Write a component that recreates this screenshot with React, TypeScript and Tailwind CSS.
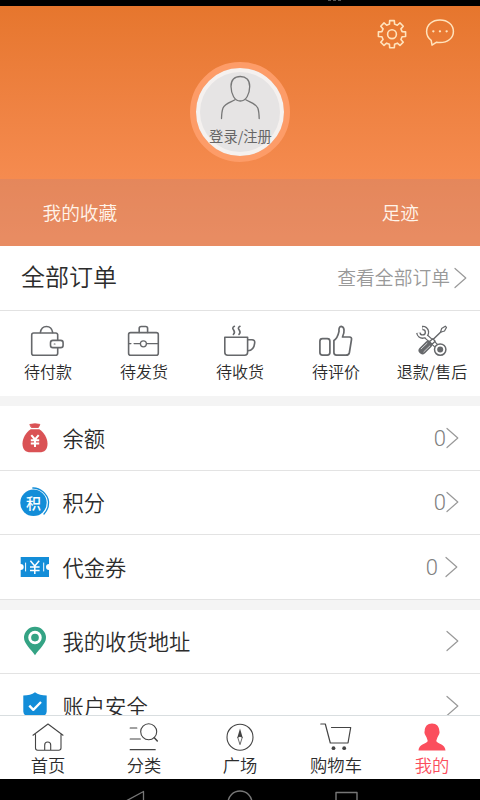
import React from "react";

type IconProps = { children: React.ReactNode; w?: number; h?: number; className?: string };

function Icon({ children, w = 36, h = 34, className = "" }: IconProps) {
  return (
    <svg
      width={w}
      height={h}
      viewBox={`0 0 ${w} ${h}`}
      fill="none"
      stroke="currentColor"
      strokeLinecap="round"
      strokeLinejoin="round"
      className={`shrink-0 ${className}`}
    >
      {children}
    </svg>
  );
}

function gearPath(cx: number, cy: number) {
  const teeth = 8;
  const pts: string[] = [];
  const step = (Math.PI * 2) / teeth;
  for (let i = 0; i < teeth; i++) {
    const a = i * step - Math.PI / 2;
    const corners: [number, number][] = [
      [10.4, -0.25],
      [13.8, -0.17],
      [13.8, 0.17],
      [10.4, 0.25],
    ];
    for (const [r, d] of corners) {
      pts.push(`${(cx + r * Math.cos(a + d)).toFixed(2)} ${(cy + r * Math.sin(a + d)).toFixed(2)}`);
    }
  }
  return `M${pts.join("L")}Z`;
}

const Chevron = ({ className = "" }: { className?: string }) => (
  <Icon w={13} h={22} className={`text-[#999] ${className}`}>
    <path d="M1 1.5L11.8 11L1 20.5" strokeWidth="1.2" />
  </Icon>
);

const orders = [
  {
    label: "待付款",
    icon: (
      <Icon>
        <path d="M27.7 16V11.5A2 2 0 0 0 25.7 9H3.7A2 2 0 0 0 1.7 11V29.3A2 2 0 0 0 3.7 31.3H25.7A2 2 0 0 0 27.7 29.3V24" strokeWidth="1.6" />
        <path d="M10.4 8.5C11 4.5 13 2.5 16.5 2.5S22 4.5 22.7 8.5" strokeWidth="1.6" />
        <rect x="20.5" y="16.4" width="12.6" height="7.2" rx="2.4" strokeWidth="1.6" />
        <path d="M24.2 20H25" strokeWidth="1.2" />
      </Icon>
    ),
  },
  {
    label: "待发货",
    icon: (
      <Icon>
        <rect x="2.6" y="8.6" width="29.7" height="22.7" rx="2" strokeWidth="1.6" />
        <path d="M13.2 8.5V4.5Q13.2 2.5 15.2 2.5H19.6Q21.6 2.5 21.6 4.5V8.5" strokeWidth="1.6" />
        <circle cx="17.4" cy="19.8" r="3" strokeWidth="1.3" />
        <path d="M8 19.6H14.2M20.5 19.6H32M2.8 19.6H5" strokeWidth="1.1" />
      </Icon>
    ),
  },
  {
    label: "待收货",
    icon: (
      <Icon>
        <path d="M2.8 13.2H25.6V28.3Q25.6 31.3 22.6 31.3H5.8Q2.8 31.3 2.8 28.3Z" strokeWidth="1.6" />
        <path d="M25.8 15.8H30Q33 15.8 32.7 18.8C32.3 23 30 26.5 25.8 26.8" strokeWidth="1.6" />
        <path d="M12.4 2.3C7.6 4.8 15.4 7 11.4 10.4M18 2.3C13.2 4.8 21 7 17 10.4" strokeWidth="1.6" />
      </Icon>
    ),
  },
  {
    label: "待评价",
    icon: (
      <Icon>
        <rect x="1.9" y="14.7" width="10" height="16.5" rx="2.6" strokeWidth="1.7" />
        <path d="M15.9 16.5C18.8 14.8 20.2 11.2 21 7.4C20.7 4.5 21.5 2.3 23.2 2.3C26.6 2.6 26.9 8 24.5 13H31.5Q33.9 13.3 33.5 15.5L31.4 28.5Q30.9 31.2 28 31.2H18.5Q15.9 31 15.9 28.5Z" strokeWidth="1.7" />
      </Icon>
    ),
  },
  {
    label: "退款/售后",
    icon: (
      <Icon>
        <path d="M11.5 11.8L22 21.5" strokeWidth="5" strokeLinecap="butt" />
        <path d="M11.5 11.8L22 21.5" strokeWidth="2.4" stroke="#fff" strokeLinecap="butt" />
        <path d="M8.2 4A4.3 4.3 0 1 1 4.4 8.8" strokeWidth="4.6" strokeLinecap="butt" />
        <path d="M8.6 4A4.3 4.3 0 1 1 4.4 8.4" strokeWidth="2" stroke="#fff" strokeLinecap="butt" />
        <path d="M12 12.3L20 19.7" strokeWidth="2.4" stroke="#fff" />
        <path d="M18.5 16L26.8 8" strokeWidth="1.5" />
        <path d="M26.5 8.2L27.6 4.6L31.3 2.2L32.5 3.4L30.5 7Z" strokeWidth="1.2" fill="#fff" />
        <path d="M8.4 26.4L14.4 20.6" strokeWidth="7.6" />
        <path d="M7.2 24.8L13 19.3" strokeWidth="0.7" stroke="#fff" />
        <path d="M9.8 27.8L15.8 22" strokeWidth="0.7" stroke="#fff" />
        <path d="M15.6 17.6L18.8 14.8L21.2 17.2L18 20.2Z" fill="#fff" strokeWidth="1.3" />
        <circle cx="26.2" cy="25.6" r="5.7" fill="#fff" strokeWidth="1.5" />
        <circle cx="26.2" cy="25.6" r="3" fill="currentColor" stroke="none" />
      </Icon>
    ),
  },
];

const BagIcon = () => (
  <Icon w={28} h={30} className="text-[#da5255]">
    <path d="M9.2 1.4Q14 .3 18.8 1.4L17.4 4.4H10.6Z" fill="currentColor" strokeWidth="1" />
    <path d="M9.7 6.2H18.3C23 9.4 26.5 15 26.5 20.5C26.5 26.8 23.5 29.3 18.5 29.3H9.5C4.5 29.3 1.5 26.8 1.5 20.5C1.5 15 5 9.4 9.7 6.2Z" fill="currentColor" stroke="none" />
    <path d="M10.3 12.2L14 16.5L17.7 12.2M14 16.5V23.9M9.8 17.2H18.2M9.8 20.5H18.2" stroke="#fff" strokeWidth="2" strokeLinecap="butt" />
  </Icon>
);

const PointsIcon = () => (
  <span className="relative flex h-[30px] w-[30px] shrink-0 items-center justify-center">
    <Icon w={30} h={30} className="absolute inset-0 text-[#138dd8]">
      <circle cx="13.5" cy="15.8" r="13.2" fill="currentColor" stroke="none" />
      <path d="M12.8 1C20 .7 27.5 7 28.5 14.5C28.8 19.5 27 23.8 24 27" strokeWidth="1.3" />
    </Icon>
    <span className="relative -left-[1.5px] text-[15px] leading-none font-medium text-white">积</span>
  </span>
);

const CouponIcon = () => (
  <Icon w={30} h={22} className="text-[#138dd8]">
    <path d="M.7 1H29V8A3 3 0 0 0 29 14V21H.7V14A3 3 0 0 0 .7 8Z" fill="currentColor" stroke="none" />
    <path d="M10.4 4.8L14.8 10L19.2 4.8M14.8 10V18M10 11H19.6M10 14.4H19.6" stroke="#fff" strokeWidth="1.5" strokeLinecap="butt" />
    <path d="M5.6 7V15M23.7 7V15" stroke="#fff" strokeWidth="1" />
  </Icon>
);

const PinIcon = () => (
  <Icon w={24} h={30} className="text-[#34a384]">
    <path d="M12 .8A10.9 10.9 0 0 1 23 11.7C23 17.5 16.5 22.7 12 29.2C7.5 22.7 1 17.5 1 11.7A10.9 10.9 0 0 1 12 .8Z" fill="currentColor" stroke="none" />
    <circle cx="12" cy="11.6" r="5.3" stroke="#fff" strokeWidth="2.9" />
  </Icon>
);

const ShieldIcon = () => (
  <Icon w={24} h={28} className="text-[#138dd8]">
    <path d="M12 .3Q16.5 3.5 23.7 3.5V19.5Q23.5 23 20 24.2L12 27.3L4 24.2Q.5 23 .3 19.5V3.5Q7.5 3.5 12 .3Z" fill="currentColor" stroke="none" />
    <path d="M6.3 13.6L10.3 17.9L18 10" stroke="#fff" strokeWidth="2.3" strokeLinecap="butt" />
  </Icon>
);

type RowProps = { icon: React.ReactNode; label: string; value?: string; inset?: boolean; last?: boolean };

function Row({ icon, label, value, inset, last }: RowProps) {
  return (
    <div
      className={`flex h-[64.5px] shrink-0 items-center bg-white ${inset ? "pr-[22px]" : "pr-[21px]"} ${last ? "" : "border-b border-[#e3e3e3]"}`}
    >
      <span className="ml-[14px] flex w-[42px] shrink-0 justify-center">{icon}</span>
      <span className="ml-[6.5px] flex-1 pb-px text-[21.3px] leading-none font-[350] text-[#2c2c2c]">{label}</span>
      {value && <span className="pt-[2px] font-['Roboto'] text-[22px] leading-none font-light text-[#808080]">{value}</span>}
      <Chevron className={inset ? "ml-[7px]" : ""} />
    </div>
  );
}

const tabs = [
  {
    label: "首页",
    icon: (
      <Icon w={32} h={30}>
        <path d="M1 13.2L16 2L31 13.2M3.5 12.5V26Q3.5 28.2 5.7 28.2H26.7Q29 28.2 29 26V12.5M12.7 28V23Q12.7 20 15.7 20T18.7 23V28" strokeWidth="1.1" />
      </Icon>
    ),
  },
  {
    label: "分类",
    icon: (
      <Icon w={32} h={30}>
        <circle cx="20.7" cy="9.7" r="8" strokeWidth="1.1" />
        <path d="M26.3 15.8L29.3 19" strokeWidth="1.5" />
        <path d="M2.2 6H8.8M2.2 17H12.3M2.2 27.7H27.2" strokeWidth="1.2" />
      </Icon>
    ),
  },
  {
    label: "广场",
    icon: (
      <Icon w={32} h={30}>
        <circle cx="16" cy="15.2" r="13" strokeWidth="1.1" />
        <path d="M13.8 15.6L16 22.6L18.2 15.6" strokeWidth=".8" />
        <path d="M16 6.5L18.8 16L16 14.8L13.2 16Z" fill="currentColor" stroke="none" />
      </Icon>
    ),
  },
  {
    label: "购物车",
    icon: (
      <Icon w={32} h={30}>
        <path d="M.8 2H5.3L10.3 21H28L30.7 5.5H11.5" strokeWidth="1.2" />
        <circle cx="13.5" cy="26.2" r="1.9" fill="currentColor" stroke="none" />
        <circle cx="24.2" cy="26.2" r="1.9" fill="currentColor" stroke="none" />
      </Icon>
    ),
  },
  {
    label: "我的",
    active: true,
    icon: (
      <Icon w={32} h={30}>
        <path d="M16 1.5C20.6 1.5 23.3 4.6 23.3 8.8C24.2 11 22.8 13 21.5 15.2C20.8 17.5 20 18.5 20.5 19.5C22 21.5 29.3 22.5 29.5 28.5H2.5C2.7 22.5 10 21.5 11.5 19.5C12 18.5 11.2 17.5 10.5 15.2C9.2 13 7.8 11 8.7 8.8C8.7 4.6 11.4 1.5 16 1.5Z" fill="currentColor" stroke="none" />
      </Icon>
    ),
  },
];

export default function App() {
  return (
    <div className="flex h-[800px] w-[480px] flex-col overflow-hidden bg-[#f4f4f4] font-['Noto_Sans_CJK_SC',sans-serif]">
      <div className="flex h-[6px] shrink-0 items-start justify-center gap-[2px] bg-black pl-[189px]">
        <i className="h-px w-[3px] bg-[#555]" />
        <i className="h-px w-[3px] bg-[#555]" />
        <i className="h-px w-[3px] bg-[#555]" />
      </div>

      <header className="flex h-[240px] shrink-0 flex-col bg-linear-to-b from-[#e6762d] to-[#fb935b]">
        <div className="relative flex h-[173px] justify-center pt-[56px]">
          <div className="absolute top-[12px] right-[24px] flex items-center gap-[16px] text-[#ffe3bd]">
            <Icon w={32} h={32}>
              <path d={gearPath(16, 16.2)} strokeWidth="1.6" />
              <circle cx="16" cy="16.2" r="4.4" strokeWidth="1.6" />
            </Icon>
            <Icon w={32} h={32}>
              <path d="M7.2 22.3C4.2 20.2 2.6 17 2.6 13.6C2.6 6.8 8.3 2 16 2S29.4 6.8 29.4 13.4S23.7 24.6 16 24.6C14.8 24.6 13.6 24.5 12.6 24.2L8 27.2Z" strokeWidth="1.5" />
              <path d="M9.3 13.3H9.4M15.9 13.3H16M22.6 13.3H22.7" strokeWidth="2.3" />
            </Icon>
          </div>
          <div className="flex h-[100px] w-[100px] flex-col items-center rounded-full border-[6px] border-[#fd9c68] bg-[#e6e4e4] shadow-[inset_0_0_0_4px_#f5f1ef]">
            <Icon w={44} h={46} className="mt-[7px] text-[#777]">
              <path d="M22.3 1.5C28 1.5 31.8 5 31.7 11.5C31.6 19.5 28 26 22.3 26S13.2 19.5 13 11.5C12.8 5 16.6 1.5 22.3 1.5Z" strokeWidth="1.3" />
              <path d="M17 24.8C13.5 27 7 28 5 33Q3.7 36.5 3.5 43.5M27.8 24.8C31.3 27 37.5 28 39.8 33Q41 36.5 41.2 43.5" strokeWidth="1.3" />
            </Icon>
            <span className="mt-[7px] ml-px text-[14.3px] leading-[16px] whitespace-nowrap text-[#666]">登录/注册</span>
          </div>
        </div>
        <div className="flex h-[67px] items-center justify-between bg-[#c58072]/35 pr-[61px] pl-[42.5px] text-[18.7px] leading-none font-[350] text-[#fff4ea]">
          <span>我的收藏</span>
          <span>足迹</span>
        </div>
      </header>

      <div className="flex h-[65px] shrink-0 items-center justify-between border-b border-[#e2e2e2] bg-white pr-[13px] pl-[21px] pb-px">
        <span className="pb-[3px] text-[24px] leading-none font-[350] text-[#2c2c2c]">全部订单</span>
        <span className="flex items-center gap-[4px] text-[18.8px] leading-none font-[350] text-[#999]">
          查看全部订单
          <Chevron />
        </span>
      </div>

      <div className="grid h-[85px] shrink-0 grid-cols-5 bg-white pt-[13px]">
        {orders.map((o) => (
          <div key={o.label} className="flex flex-col items-center text-[#66686b]">
            {o.icon}
            <span className="mt-[4px] text-[16px] leading-[18px] font-[350] whitespace-nowrap text-[#2c2c2c]">{o.label}</span>
          </div>
        ))}
      </div>

      <div className="mt-[10px] flex shrink-0 flex-col">
        <Row icon={<BagIcon />} label="余额" value="0" />
        <Row icon={<PointsIcon />} label="积分" value="0" />
        <Row icon={<CouponIcon />} label="代金券" value="0" inset />
      </div>

      <div className="mt-[10px] flex min-h-0 flex-1 flex-col overflow-hidden">
        <Row icon={<PinIcon />} label="我的收货地址" />
        <Row icon={<ShieldIcon />} label="账户安全" last />
      </div>

      <nav className="grid h-[64px] shrink-0 grid-cols-5 border-t border-[#d9dee0] bg-white pt-[6px]">
        {tabs.map((t) => (
          <div key={t.label} className={`flex flex-col items-center ${t.active ? "text-[#fb4e5d]" : "text-[#444]"}`}>
            {t.icon}
            <span className={`mt-[3px] text-[17.3px] leading-[20px] font-[350] ${t.active ? "" : "text-[#2c2c2c]"}`}>{t.label}</span>
          </div>
        ))}
      </nav>

      <div className="h-[21px] shrink-0 bg-black">
        <Icon w={480} h={21} className="text-[#777]">
          <path d="M143.5 24V12.5L126 22" strokeWidth="1.3" />
          <circle cx="240" cy="24" r="12" strokeWidth="1.4" />
          <path d="M336 24V13.5H357V24" strokeWidth="1.4" />
        </Icon>
      </div>
    </div>
  );
}
